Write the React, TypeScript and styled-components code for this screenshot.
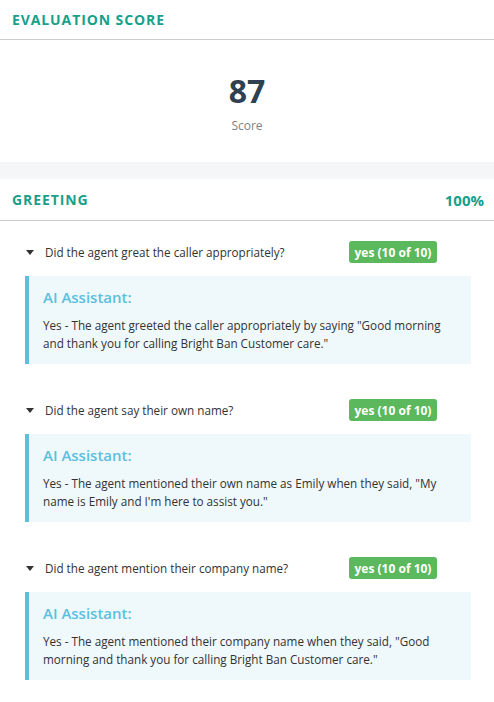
import React from 'react';
import styled, { createGlobalStyle } from 'styled-components';

const GlobalStyle = createGlobalStyle`
  body {
    margin: 0;
    background: #fff;
    font-family: "Open Sans", "Liberation Sans", sans-serif;
    color: #333;
  }
`

const Page = styled.div`
  width: 494px;
  display: flex;
  flex-direction: column;
`

const PanelHeader = styled.div`
  height: 39px;
  display: flex;
  align-items: center;
  justify-content: space-between;
  padding: 0 10px 0 12px;
  border-bottom: 1px solid #c9cccf;
`

const HeaderTitle = styled.div`
  font-size: 14px;
  font-weight: 700;
  letter-spacing: 0.9px;
  text-transform: uppercase;
  color: #18a08a;
`

const HeaderValue = styled.div`
  font-size: 15px;
  font-weight: 700;
  color: #18a08a;
`

const ScoreBlock = styled.div`
  height: 122px;
  display: flex;
  flex-direction: column;
  align-items: center;
  padding-top: 30px;
  box-sizing: border-box;
`

const ScoreValue = styled.div`
  font-size: 32px;
  font-weight: 700;
  line-height: 42px;
  color: #2f4050;
`

const ScoreLabel = styled.div`
  font-size: 12px;
  line-height: 18px;
  margin-top: 5px;
  color: #7b838a;
`

const Band = styled.div`
  height: 17px;
  background: #f5f6f8;
`

const SectionHeader = styled(PanelHeader)`
  height: 41px;
`

const QuestionList = styled.div`
  padding: 20px 23px 21px 25px;
  display: flex;
  flex-direction: column;
  gap: 35px;
`

const Question = styled.div`
  display: flex;
  flex-direction: column;
  gap: 13px;
`

const QuestionRow = styled.div`
  display: flex;
  align-items: center;
  height: 22px;
`

const Caret = styled.span`
  width: 0;
  height: 0;
  margin-left: 1px;
  border-left: 4px solid transparent;
  border-right: 4px solid transparent;
  border-top: 5px solid #333;
`

const QuestionText = styled.div`
  width: 304px;
  margin-left: 11px;
  font-size: 11.7px;
  color: #333;
`

const Badge = styled.span<{ tone?: string }>`
  height: 22px;
  width: 88px;
  box-sizing: border-box;
  display: inline-flex;
  align-items: center;
  justify-content: center;
  border-radius: 3px;
  background: ${(props) => props.tone || '#5cb85c'};
  color: #fff;
  font-size: 12px;
  font-weight: 700;
`

const AnswerBox = styled.div`
  background: #eff8fb;
  border-left: 4px solid #5bc0de;
  padding: 11px 14px 12px 14px;
`

const AnswerTitle = styled.div`
  font-size: 15px;
  font-weight: 600;
  line-height: 20px;
  color: #5bc0de;
  margin-bottom: 9px;
`

const AnswerText = styled.div`
  font-size: 11.7px;
  line-height: 18px;
  color: #333;
`

type Item = {
  question: string;
  answer: string;
  result: string;
}

const ITEMS: Item[] = [
  {
    question: 'Did the agent great the caller appropriately?',
    answer: 'Yes - The agent greeted the caller appropriately by saying "Good morning and thank you for calling Bright Ban Customer care."',
    result: 'yes (10 of 10)',
  },
  {
    question: 'Did the agent say their own name?',
    answer: 'Yes - The agent mentioned their own name as Emily when they said, "My name is Emily and I\'m here to assist you."',
    result: 'yes (10 of 10)',
  },
  {
    question: 'Did the agent mention their company name?',
    answer: 'Yes - The agent mentioned their company name when they said, "Good morning and thank you for calling Bright Ban Customer care."',
    result: 'yes (10 of 10)',
  },
]

export default function App() {
  return <>
    <GlobalStyle />
    <Page>
      <PanelHeader>
        <HeaderTitle>Evaluation Score</HeaderTitle>
      </PanelHeader>
      <ScoreBlock>
        <ScoreValue>87</ScoreValue>
        <ScoreLabel>Score</ScoreLabel>
      </ScoreBlock>
      <Band />
      <SectionHeader>
        <HeaderTitle>Greeting</HeaderTitle>
        <HeaderValue>100%</HeaderValue>
      </SectionHeader>
      <QuestionList>
        {ITEMS.map((item) => <Question key={item.question}>
          <QuestionRow>
            <Caret />
            <QuestionText>{item.question}</QuestionText>
            <Badge>{item.result}</Badge>
          </QuestionRow>
          <AnswerBox>
            <AnswerTitle>AI Assistant:</AnswerTitle>
            <AnswerText>{item.answer}</AnswerText>
          </AnswerBox>
        </Question>)}
      </QuestionList>
    </Page>
  </>
}
